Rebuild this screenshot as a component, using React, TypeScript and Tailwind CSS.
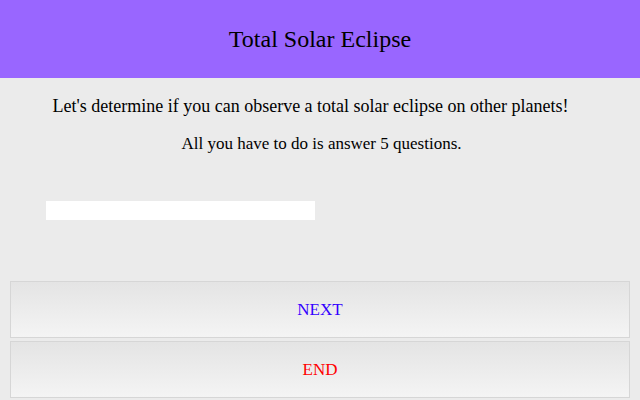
export default function App() {
  return (
    <div className="w-[640px] h-[400px] overflow-hidden bg-[#ebebeb] font-['Liberation_Serif',serif] text-black">
      <header className="h-[78px] bg-[#9966ff] flex items-center justify-center">
        <h1 className="text-[24px] leading-none">Total Solar Eclipse</h1>
      </header>
      <div className="flex flex-col items-center leading-none pt-[19px] gap-[20px]">
        <p className="text-[18px] pr-[19px]">Let's determine if you can observe a total solar eclipse on other planets!</p>
        <p className="text-[17px] pl-[3px]">All you have to do is answer 5 questions.</p>
      </div>
      <div className="pl-[46px] pt-[46px]">
        <input type="text" className="w-[269px] h-[19px] bg-white outline-none" />
      </div>
      <div className="flex flex-col gap-[3px] px-[10px] pt-[59px]">
        <button className="h-[57px] w-full border border-[#d6d6d6] bg-gradient-to-b from-[#e4e4e4] to-[#f4f4f4] text-[#3300ff] text-[17px]">
          NEXT
        </button>
        <button className="h-[57px] w-full border border-[#d6d6d6] bg-gradient-to-b from-[#e4e4e4] to-[#f4f4f4] text-[#ff0000] text-[17px]">
          END
        </button>
      </div>
    </div>
  );
}
